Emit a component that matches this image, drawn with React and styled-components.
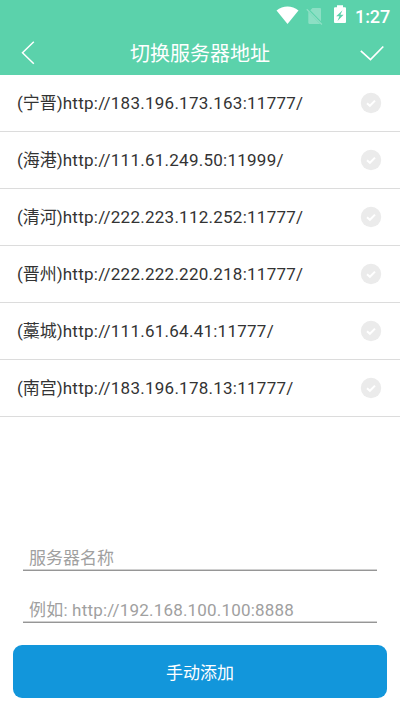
import React, { useState } from 'react';
import styled, { createGlobalStyle } from 'styled-components';

const servers = [
  { name: '宁晋', url: 'http://183.196.173.163:11777/' },
  { name: '海港', url: 'http://111.61.249.50:11999/' },
  { name: '清河', url: 'http://222.223.112.252:11777/' },
  { name: '晋州', url: 'http://222.222.220.218:11777/' },
  { name: '藁城', url: 'http://111.61.64.41:11777/' },
  { name: '南宫', url: 'http://183.196.178.13:11777/' },
];

// --- Styled Components ---
const GlobalStyle = createGlobalStyle`
  * {
    box-sizing: border-box;
  }

  body {
    margin: 0;
    background-color: #fff;
    font-family: Roboto, 'Noto Sans CJK SC', sans-serif;
  }
`;

const Screen = styled.div`
  display: flex;
  flex-direction: column;
  height: 100vh;
  min-height: 711px;
`;

const Header = styled.header`
  height: 75px;
  background-color: #5bd2ab;
  color: #fff;
`;

const StatusBar = styled.div`
  display: flex;
  justify-content: flex-end;
  height: 30px;
  padding-right: 10px;
`;

const Clock = styled.span`
  width: 35px;
  margin: 6px 0 0 5px;
  font-size: 18px;
  line-height: 22px;
  font-weight: 500;
  letter-spacing: -0.1px;
  text-align: right;
`;

const TitleBar = styled.div`
  display: flex;
  align-items: center;
  justify-content: space-between;
  height: 45px;
  padding: 0 16px 0 20px;
`;

const Title = styled.h1`
  margin: 0;
  padding: 2px 0 0 4px;
  font-size: 20px;
  line-height: 30px;
  font-weight: 400;
`;

const IconButton = styled.button`
  display: flex;
  padding: 0;
  border: none;
  background: none;
  color: inherit;
  cursor: pointer;
`;

const ServerList = styled.ul`
  margin: 0;
  padding: 0;
  list-style: none;
`;

const ServerRow = styled.li`
  display: flex;
  align-items: center;
  justify-content: space-between;
  height: 57px;
  padding: 0 18px 0 17px;
  border-bottom: 1px solid #dcdcdc;
  color: #333;
  font-size: 17px;
  cursor: pointer;
`;

const Address = styled.span`
  line-height: 24px;
  white-space: nowrap;
`;

const Url = styled.span`
  letter-spacing: 0.25px;
`;

const AddForm = styled.form`
  display: flex;
  flex-direction: column;
  margin-top: auto;
  padding: 0 13px 13px;
`;

const Field = styled.input`
  height: 32px;
  margin: 0 10px 20px;
  padding: 6px 6px 0;
  border: none;
  border-bottom: 1px solid #969696;
  box-shadow: inset 0 -1px 0 #d0d0d0;
  outline: none;
  font-family: inherit;
  font-size: 17px;
  letter-spacing: ${({ $tracking }) => $tracking || 'normal'};
  color: #333;

  &::placeholder {
    color: #a0a0a0;
    opacity: 1;
  }
`;

const AddButton = styled.button`
  height: 53px;
  margin-top: 2px;
  padding: 0;
  border: none;
  border-radius: 9px;
  background-color: #1296db;
  color: #fff;
  font-family: inherit;
  font-size: 17px;
  cursor: pointer;
`;

// --- Components ---
const StatusIcons = () => (
  <svg width="74" height="30" viewBox="0 0 74 30">
    <path d="M0.5 10.5C7 5.3 16 5.3 22.5 10.5L11.5 24Z" fill="#fff" />
    <g fill="#fff" opacity="0.3">
      <path d="M36.5 8H44Q45 8 45 9V21.3L34.3 10.2Z" />
      <path d="M32.3 11.8L44.2 24H33.8Q32.3 24 32.3 22.5Z" />
      <path d="M31.2 8.8L46.4 24L45.5 24.9L30.3 9.7Z" />
    </g>
    <path d="M61 5.2H67V7.2H69Q70 7.2 70 8.2V22Q70 23 69 23H59Q58 23 58 22V8.2Q58 7.2 59 7.2H61Z" fill="#fff" />
    <path d="M66.5 10.3L60.2 16.3H63.4L61.5 21L67.6 14.8H64.4Z" fill="#5bd2ab" />
  </svg>
);

const BackIcon = () => (
  <svg width="16" height="24" viewBox="0 0 16 24" fill="none" stroke="#fff" strokeWidth="1.5">
    <path d="M13.8 0.8L2.5 11.7L13.8 22.8" />
  </svg>
);

const ConfirmIcon = () => (
  <svg width="24" height="18" viewBox="0 0 24 18" fill="none" stroke="#fff" strokeWidth="1.7">
    <path d="M0.8 6.8L10.5 15.6L23.3 2.5" />
  </svg>
);

const RowCheck = ({ active }) => (
  <svg width="22" height="22" viewBox="0 0 22 22" fill="none">
    <circle cx="11" cy="11" r="10.2" fill={active ? '#5bd2ab' : '#ebebeb'} />
    <path d="M7 11.2L9.9 13.8L15 8.6" stroke="#fff" strokeWidth="2" />
  </svg>
);

const App = () => {
  const [selected, setSelected] = useState(null);

  return (
    <Screen>
      <GlobalStyle />
      <Header>
        <StatusBar>
          <StatusIcons />
          <Clock>1:27</Clock>
        </StatusBar>
        <TitleBar>
          <IconButton type="button"><BackIcon /></IconButton>
          <Title>切换服务器地址</Title>
          <IconButton type="button"><ConfirmIcon /></IconButton>
        </TitleBar>
      </Header>
      <ServerList>
        {servers.map((server) => (
          <ServerRow key={server.name} onClick={() => setSelected(server.name)}>
            <Address>({server.name})<Url>{server.url}</Url></Address>
            <RowCheck active={selected === server.name} />
          </ServerRow>
        ))}
      </ServerList>
      <AddForm onSubmit={(e) => e.preventDefault()}>
        <Field placeholder="服务器名称" />
        <Field placeholder="例如: http://192.168.100.100:8888" $tracking="0.19px" />
        <AddButton type="submit">手动添加</AddButton>
      </AddForm>
    </Screen>
  );
};

export default App;
